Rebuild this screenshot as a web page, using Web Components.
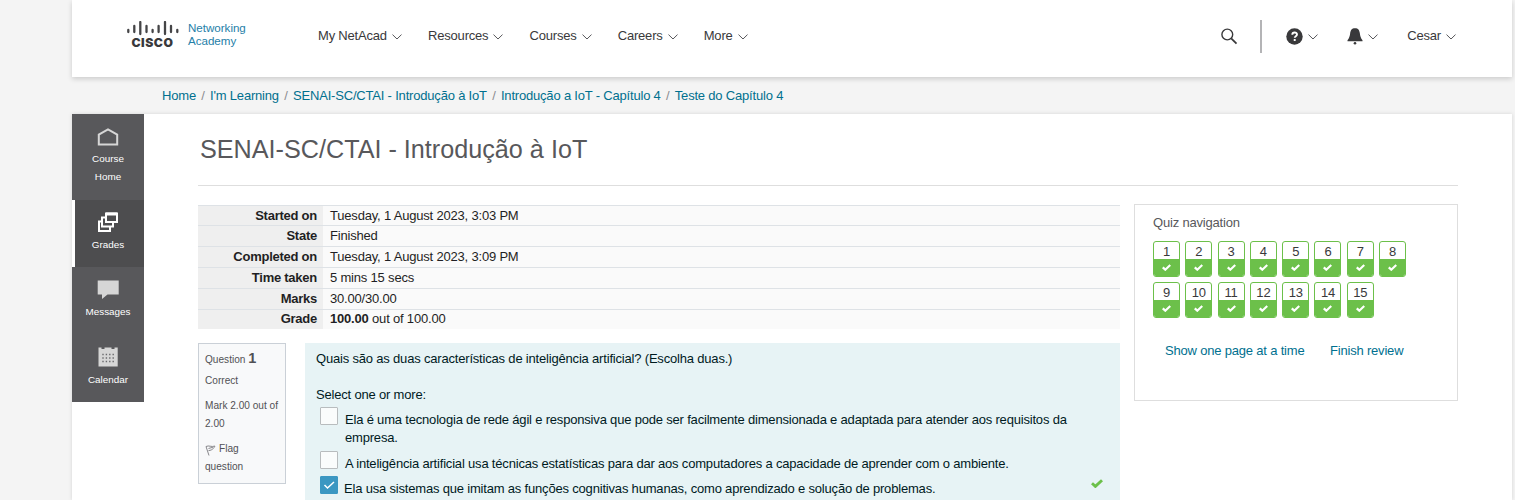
<!DOCTYPE html>
<html lang="pt">
<head>
<meta charset="utf-8">
<title>SENAI-SC/CTAI - Introdução à IoT</title>
<style>
html,body{margin:0;height:500px;overflow:hidden}
body{background:#f4f4f4;font:13px/18px "Liberation Sans",Arial,sans-serif;letter-spacing:-.19px;color:#212529}
</style>
</head>
<body>
<academy-page></academy-page>
<script>
function define(name, html) {
  const t = document.createElement('template');
  t.innerHTML = html;
  customElements.define(name, class extends HTMLElement {
    constructor() {
      super();
      this.attachShadow({mode: 'open'}).appendChild(t.content.cloneNode(true));
    }
  });
}

define('chevron-icon', `<style>:host{display:block;width:10px;height:6px}svg{display:block}</style>
<svg width="10" height="6" viewBox="0 0 10 6" fill="none" stroke="#58585b" stroke-width="1"><path d="M.5.6 5 5 9.500.6"/></svg>`);

define('nav-item', `<style>:host{display:flex;align-items:center;gap:5px;color:#39393b;line-height:18px;white-space:nowrap}chevron-icon{margin-top:1px}</style>
<slot></slot><chevron-icon></chevron-icon>`);

define('cisco-logo', `<style>
:host{display:flex;width:120px;height:30px;padding-top:21px}
.mark{width:52px;margin-right:9px}
svg{display:block}
.word{font:900 12.2px/14px Inter,sans-serif;letter-spacing:.5px;color:#39393b;margin:0 0 0 4.500px;white-space:nowrap}
.name{font:11.6px/13px "Liberation Sans",Arial,sans-serif;color:#2580a8;letter-spacing:-.02px}
</style>
<div class="mark"><svg width="52" height="15" viewBox="0 0 52 15" stroke="#454547" stroke-width="2.300" stroke-linecap="round"><path d="M1.300 9v2M7.300 5v6M13.300 1v12M19.500 5v6M25.600 9v2M31.600 5v6M38 1v12M44 5v6M50.300 9v2"/></svg><div class="word">CISCO</div></div>
<div class="name">Networking<br>Academy</div>`);

define('site-header', `<style>
:host{display:flex;box-sizing:border-box;height:77px;background:#fff;box-shadow:0 2px 5px rgba(0,0,0,.17);padding-left:55px;position:relative}
nav{display:flex;gap:26.100px;margin:27px 0 0 71px;height:18px}
.tools{display:flex;margin-left:auto;padding-right:56px;height:18px;padding-top:27px;align-items:center}
.line{width:2px;height:33px;background:#b4b4b6;margin:0 24px 0 22px}
.help{margin-right:29px}.bell{margin-right:29px}
svg{display:block}
</style>
<cisco-logo></cisco-logo>
<nav><nav-item>My NetAcad</nav-item><nav-item>Resources</nav-item><nav-item>Courses</nav-item><nav-item>Careers</nav-item><nav-item>More</nav-item></nav>
<div class="tools">
<svg width="18" height="18" viewBox="0 0 18 18" fill="none" stroke="#39393b"><circle cx="7.300" cy="7.500" r="5.400" stroke-width="1.400"/><path d="m11.200 11.400 5.300 5.200" stroke-width="1.800"/></svg>
<div class="line"></div>
<nav-item class="help"><svg width="17" height="17" viewBox="0 0 17 17"><circle cx="8.500" cy="8.500" r="8.200" fill="#39393b"/><path d="M6.300 6.800c0-3 4.800-2.900 4.700-.2 0 1.600-2.300 1.600-2.300 3.200M8.700 11v1.900" fill="none" stroke="#fff" stroke-width="1.900"/></svg></nav-item>
<nav-item class="bell"><svg width="16" height="17" viewBox="0 0 16 17" fill="#39393b"><path d="M8 .2c3.300 0 4.400 2 4.800 4.900.4 3.500 1 5 2.700 7.200v.9H.5v-.9c1.700-2.200 2.300-3.700 2.700-7.200C3.600 2.200 4.700.2 8 .2Z"/><circle cx="8" cy="15.300" r="1.300"/></svg></nav-item>
<nav-item>Cesar</nav-item>
</div>`);

define('bread-crumbs', `<style>
:host{display:flex;height:37px;box-sizing:border-box;padding:10px 0 0 90px;line-height:18px}
a{color:#00708f;white-space:nowrap;letter-spacing:-.19px}i{font-style:normal;color:#8c8c91;padding:0 5.350px}
</style>
<a>Home</a><i>/</i><a>I'm Learning</a><i>/</i><a>SENAI-SC/CTAI - Introdução à IoT</a><i>/</i><a>Introdução a IoT - Capítulo 4</a><i>/</i><a>Teste do Capítulo 4</a>`);

define('side-item', `<style>
:host{display:block;box-sizing:border-box;height:67px;background:#58585b;color:#fff;text-align:center;font-size:9.900px;letter-spacing:0;line-height:18px;padding-top:10px}
:host([active]){background:#4d4d4f;border-left:3px solid #fff;padding-right:3px}
:host([tall]){height:86px;padding-top:12px}
:host([last]){height:68px;padding-top:11px}
::slotted(svg){display:block;margin:0 auto 2px;width:24px;height:24px}
:host([tall]) ::slotted(svg){margin-bottom:0}
</style><slot></slot>`);

define('side-bar', `<style>:host{display:block;width:72px;flex:none}</style>
<side-item tall><svg viewBox="0 0 24 24" fill="none" stroke="#d6d6d6" stroke-width="2"><path d="M2.800 18.500V8.700L12 3.500l9.200 5.200v9.800z"/></svg>Course<br>Home</side-item>
<side-item active><svg viewBox="0 0 24 24" fill="#4d4d4f" stroke="#fff" stroke-width="2"><path d="M3 11.500h11v9.500H3z"/><path d="M6 7.500h11v9H6z"/><path d="M10 3.500h11v8.500H10z"/><path d="M10 4h11" stroke-width="3"/></svg>Grades</side-item>
<side-item><svg viewBox="0 0 24 24" fill="#d6d6d6"><path d="M1.700 3.500h21v14H11.500L6 22v-4.500H1.700z"/></svg>Messages</side-item>
<side-item last><svg viewBox="0 0 24 24"><path d="M2.500 2.500h3V4h3V2.500h7V4h3V2.500h3.200V21.500H2.500z" fill="#d6d6d6"/><path d="M6.300 9.500h12M6.300 13h12M6.300 16.500h12" stroke="#6a6a6d" stroke-width="1.400" stroke-dasharray="1.400 2"/></svg>Calendar</side-item>`);

define('summary-row', `<style>
:host{display:flex;box-sizing:border-box;height:21px;border-top:1px solid #dee2e6;line-height:20px;background:#fafafa;color:#1f1f24}
:host([short]){height:20px;line-height:19px}
:host([last]){line-height:17px}
.k{width:119px;padding-right:6px;text-align:right;font-weight:bold;background:#efefef;flex:none;margin-right:7px;white-space:nowrap;letter-spacing:-.25px}
</style><div class="k"><slot name="k"></slot></div><div><slot></slot></div>`);

define('quiz-summary', `<style>:host{display:block;height:124px}</style>
<summary-row short><span slot="k">Started on</span>Tuesday, 1 August 2023, 3:03 PM</summary-row>
<summary-row><span slot="k">State</span>Finished</summary-row>
<summary-row><span slot="k">Completed on</span>Tuesday, 1 August 2023, 3:09 PM</summary-row>
<summary-row><span slot="k">Time taken</span>5 mins 15 secs</summary-row>
<summary-row><span slot="k">Marks</span>30.00/30.00</summary-row>
<summary-row short last><span slot="k">Grade</span><b>100.00</b> out of 100.00</summary-row>`);

define('question-info', `<style>
:host{display:block;box-sizing:border-box;width:88px;height:141px;border:1px solid #cad0d7;background:#f8f9fa;padding:5px 0 0 6px;font-size:10.100px;letter-spacing:0;line-height:18px;color:#515155;flex:none;white-space:nowrap}
b{font-size:14.500px}.a{height:18px}.b{margin-top:5px}.c{margin-top:7px}
svg{vertical-align:-4px;margin-right:3px}
</style>
<div class="a">Question <b>1</b></div><div class="b">Correct</div><div class="c">Mark 2.00 out of<br>2.00</div>
<div class="c"><svg width="11" height="12" viewBox="0 0 11 12" fill="none" stroke="#88888c"><path d="M1 2.500 4 11.500M1 2.500c3-1.500 5 .8 9-.4-1.500 2-2 4-6.500 4.500M3.500 4.500 8 3.200"/></svg>Flag<br>question</div>`);

define('check-mark', `<style>:host{display:block}svg{display:block;width:100%;height:100%}</style>
<svg viewBox="0 0 12 9" fill="none" stroke="currentColor" stroke-width="2.900"><path d="m1 4.300 3.400 3.100L11 1.200"/></svg>`);

define('answer-option', `<style>
:host{display:flex;color:#001a1e;line-height:18px}
.box{box-sizing:border-box;width:18px;height:18px;border:1px solid #b8bcbe;border-radius:1px;background:#fafcfc;margin:0 7px 0 4px;flex:none}
.box svg{display:none}
:host([checked]) .box{background:#3b97c2;border-color:#3b97c2;margin-right:6px}
:host([checked]) svg{display:block}
.t{padding-top:4px;white-space:nowrap}
check-mark{display:none;width:12px;height:9px;color:#6cc04a;margin:3px 17px 0 auto}
:host([checked]) check-mark{display:block}
</style><div class="box"><svg width="16" height="16" viewBox="0 0 16 16" fill="none" stroke="#fff" stroke-width="1.500"><path d="m3.500 8 3 3 6.500-6"/></svg></div><div class="t"><slot></slot></div><check-mark></check-mark>`);

define('question-body', `<style>
:host{display:block;width:804px;height:160px;box-sizing:border-box;background:#e7f3f5;color:#001a1e;padding:7px 0 0 11px;line-height:18px;letter-spacing:-.187px}
.s{margin:18px 0 3px}answer-option{margin-bottom:5px}
</style>
<div>Quais são as duas características de inteligência artificial? (Escolha duas.)</div>
<div class="s">Select one or more:</div>
<answer-option style="height:39px">Ela é uma tecnologia de rede ágil e responsiva que pode ser facilmente dimensionada e adaptada para atender aos requisitos da<br>empresa.</answer-option>
<answer-option style="height:20px">A inteligência artificial usa técnicas estatísticas para dar aos computadores a capacidade de aprender com o ambiente.</answer-option>
<answer-option checked>Ela usa sistemas que imitam as funções cognitivas humanas, como aprendizado e solução de problemas.</answer-option>`);

define('quiz-button', `<style>
:host{display:flex;flex-direction:column;box-sizing:border-box;width:27px;height:36px;border:1px solid #6cc04a;border-radius:3px;overflow:hidden;background:#fff;text-align:center;color:#39393b;line-height:19px}
.n{height:17px}.g{flex:1;background:#6cc04a;display:flex;justify-content:center;align-items:center;color:#fff}
check-mark{width:9px;height:7px}
</style><div class="n"><slot></slot></div><div class="g"><check-mark></check-mark></div>`);

define('quiz-navigation', `<style>
:host{display:block;box-sizing:border-box;width:324px;height:197px;border:1px solid #dedede;padding:9px 18px 0;color:#58585b}
.g{display:grid;grid-template-columns:repeat(8,27px);column-gap:5.300px;row-gap:5px;margin-top:9px}
.l{display:flex;gap:25.500px;margin:24px 0 0 12px;color:#00708f;white-space:nowrap}
</style><div>Quiz navigation</div>
<div class="g">${Array.from({length: 15}, (_, i) => `<quiz-button>${i + 1}</quiz-button>`).join('')}</div>
<div class="l"><a>Show one page at a time</a><a>Finish review</a></div>`);

define('course-content', `<style>
:host{display:block;flex:1;padding:0 54px}
h1{margin:0;height:72px;box-sizing:border-box;padding:20px 0 0 2px;border-bottom:1px solid #dedede;font-weight:400;font-size:25.200px;letter-spacing:0;line-height:30px;color:#58585b}
.cols{display:flex;gap:14px;padding-top:18px}
.left{width:922px;padding-top:1px;flex:none}
.q{display:flex;justify-content:space-between;margin-top:14px}
.q question-body{width:815px}
</style>
<h1>SENAI-SC/CTAI - Introdução à IoT</h1>
<div class="cols"><div class="left"><quiz-summary></quiz-summary><div class="q"><question-info></question-info><question-body></question-body></div></div>
<quiz-navigation></quiz-navigation></div>`);

define('academy-page', `<style>
:host{display:block;width:1440px;height:500px;margin-left:72px}
main{display:flex;height:386px;background:#fff;box-shadow:0 0 4px rgba(0,0,0,.13)}
</style><site-header></site-header><bread-crumbs></bread-crumbs><main><side-bar></side-bar><course-content></course-content></main>`);
</script>
</body>
</html>
